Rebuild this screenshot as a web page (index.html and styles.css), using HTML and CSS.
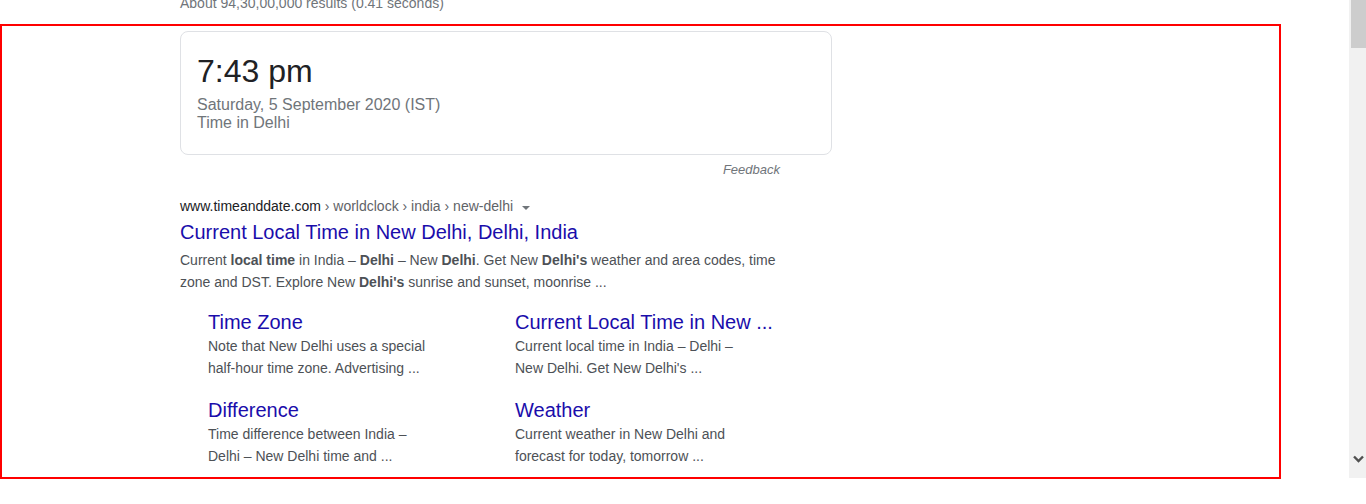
FILE: index.html
```html
<!DOCTYPE html>
<html>
<head>
<meta charset="utf-8">
<link rel="stylesheet" href="styles.css">
</head>
<body>
<div class="page">
  <main class="main">
    <div class="col">
      <div class="stats">About 94,30,00,000 results (0.41 seconds)</div>
      <div class="card">
        <div class="time">7:43 pm</div>
        <div class="sub">Saturday, 5 September 2020 (IST)</div>
        <div class="sub">Time in Delhi</div>
      </div>
      <div class="feedback">Feedback</div>
      <div class="result">
        <div class="url"><span class="host">www.timeanddate.com</span> › worldclock › india › new-delhi<span class="tri"></span></div>
        <a class="title" href="#">Current Local Time in New Delhi, Delhi, India</a>
        <div class="snippet">Current <b>local time</b> in India – <b>Delhi</b> – New <b>Delhi</b>. Get New <b>Delhi's</b> weather and area codes, time zone and DST. Explore New <b>Delhi's</b> sunrise and sunset, moonrise ...</div>
        <div class="sitelinks">
          <div class="sl">
            <a class="sl-title" href="#">Time Zone</a>
            <div class="sl-desc">Note that New Delhi uses a special half-hour time zone. Advertising ...</div>
          </div>
          <div class="sl">
            <a class="sl-title" href="#">Current Local Time in New ...</a>
            <div class="sl-desc">Current local time in India – Delhi – New Delhi. Get New Delhi's ...</div>
          </div>
          <div class="sl">
            <a class="sl-title" href="#">Difference</a>
            <div class="sl-desc">Time difference between India – Delhi – New Delhi time and ...</div>
          </div>
          <div class="sl">
            <a class="sl-title" href="#">Weather</a>
            <div class="sl-desc">Current weather in New Delhi and forecast for today, tomorrow ...</div>
          </div>
        </div>
      </div>
    </div>
    <div class="highlight"></div>
  </main>
  <div class="scrollbar">
    <div class="thumb"></div>
    <svg class="arrow" width="11" height="8" viewBox="0 0 11 8"><path d="M1 1.5 L5.5 6 L10 1.5" fill="none" stroke="#505050" stroke-width="2.4"/></svg>
  </div>
</div>
</body>
</html>
```
FILE: styles.css
```css
* { box-sizing: border-box; }
html, body { margin: 0; padding: 0; background: #fff; }
body { font-family: "Liberation Sans", Arial, sans-serif; height: 504px; overflow: hidden; }
.page { display: flex; height: 504px; }
.main { flex: 1; position: relative; }
.col { padding-left: 180px; margin-top: -7px; }
.stats { font-size: 14px; line-height: 20px; color: #70757a; }
.card {
  margin-top: 18px;
  width: 652px;
  border: 1px solid #dfe1e5;
  border-radius: 8px;
  padding: 19px 16px 22px 16px;
}
.time { font-size: 32px; line-height: 40px; color: #202124; margin-bottom: 5px; }
.sub { font-size: 16px; line-height: 18px; color: #70757a; }
.feedback {
  width: 600px;
  text-align: right;
  font-style: italic;
  font-size: 13px;
  line-height: 16px;
  color: #70757a;
  margin-top: 7px;
}
.result { margin-top: 18px; width: 600px; }
.url { font-size: 14px; line-height: 20px; color: #5f6368; display: flex; align-items: center; white-space: pre; }
.host { color: #202124; }
.tri {
  display: inline-block;
  width: 0; height: 0;
  border-left: 4px solid transparent;
  border-right: 4px solid transparent;
  border-top: 4px solid #70757a;
  margin-left: 9px;
  margin-top: 3px;
}
.title {
  display: block;
  margin-top: 3px;
  font-size: 20px;
  line-height: 26px;
  color: #1a0dab;
  text-decoration: none;
}
.snippet { margin-top: 4px; font-size: 14px; line-height: 22px; color: #4d5156; }
.snippet b { color: #4d5156; }
.sitelinks {
  margin-top: 17px;
  padding-left: 28px;
  display: grid;
  grid-template-columns: 307px 1fr;
  row-gap: 19px;
}
.sl-title {
  display: block;
  font-size: 20px;
  line-height: 24px;
  color: #1a0dab;
  text-decoration: none;
  white-space: nowrap;
}
.sl-desc { margin-top: 1px; max-width: 230px; font-size: 14px; line-height: 22px; color: #4d5156; }
.highlight {
  position: absolute;
  left: 0;
  top: 24px;
  width: 1281px;
  height: 455px;
  border: 2px solid #ff0000;
  pointer-events: none;
}
.scrollbar {
  width: 17px;
  height: 478px;
  background: #f1f1f1;
  position: relative;
  display: flex;
  flex-direction: column;
  justify-content: space-between;
  align-items: center;
}
.thumb { width: 15px; height: 48px; background: #cdcdcd; margin-left: 1px; }
.arrow { margin-bottom: 15px; margin-left: 1px; }
```
